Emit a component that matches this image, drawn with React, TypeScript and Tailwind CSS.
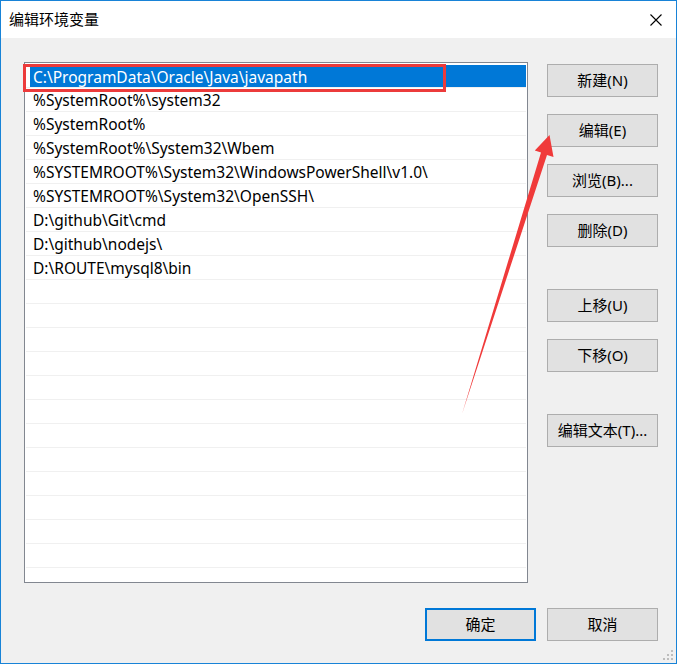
import React from "react";

const rows = [
  "C:\\ProgramData\\Oracle\\Java\\javapath",
  "%SystemRoot%\\system32",
  "%SystemRoot%",
  "%SystemRoot%\\System32\\Wbem",
  "%SYSTEMROOT%\\System32\\WindowsPowerShell\\v1.0\\",
  "%SYSTEMROOT%\\System32\\OpenSSH\\",
  "D:\\github\\Git\\cmd",
  "D:\\github\\nodejs\\",
  "D:\\ROUTE\\mysql8\\bin",
];

function Btn({ label, def, className = "" }: { label: string; def?: boolean; className?: string }) {
  return (
    <div
      className={
        "w-[111px] h-[33px] flex items-center justify-center bg-[#e1e1e1] text-[15px] text-black " +
        (def ? "border-2 border-[#0078d7] " : "border border-[#adadad] ") +
        className
      }
    >
      {label}
    </div>
  );
}

export default function App() {
  const total = 21;
  return (
    <div className="relative w-[677px] h-[664px] border border-[#1883d7] bg-[#f0f0f0] flex flex-col font-['Noto_Sans','Noto_Sans_CJK_SC',sans-serif] text-black overflow-hidden">
      {/* title bar */}
      <div className="h-[37px] bg-white flex items-center justify-between pl-[8px] pr-[14px] shrink-0">
        <span className="text-[15px] font-['Noto_Sans_CJK_SC',sans-serif]">编辑环境变量</span>
        <svg width="12" height="12" viewBox="0 0 12 12">
          <path d="M0.5 0.5 L11.5 11.5 M11.5 0.5 L0.5 11.5" stroke="#000" strokeWidth="1.1" />
        </svg>
      </div>

      {/* body */}
      <div className="flex pl-[23px] pt-[24px] gap-[19px]">
        <div className="w-[504px] h-[521px] border border-[#828790] bg-white pt-[1px] px-[1px] overflow-hidden">
          {Array.from({ length: total }).map((_, i) => {
            const text = rows[i];
            const sel = i === 0;
            return (
              <div key={i} className="h-[24px] border-b border-[#f0f0f0] flex">
                {sel ? (
                  <div className="ml-[4px] mt-[1px] flex-1 bg-[#0078d7] text-white text-[15.5px] leading-[22px] pt-[1px] pl-[3px] whitespace-nowrap">
                    {text}
                  </div>
                ) : (
                  <div className="flex-1 text-[15.5px] leading-[21px] pt-[2px] pl-[7px] whitespace-nowrap">{text ?? ""}</div>
                )}
              </div>
            );
          })}
        </div>
        <div className="flex flex-col pt-[2px]">
          <Btn label="新建(N)" />
          <Btn label="编辑(E)" className="mt-[17px]" />
          <Btn label="浏览(B)..." className="mt-[17px]" />
          <Btn label="删除(D)" className="mt-[17px]" />
          <Btn label="上移(U)" className="mt-[42px]" />
          <Btn label="下移(O)" className="mt-[17px]" />
          <Btn label="编辑文本(T)..." className="mt-[42px]" />
        </div>
      </div>

      {/* footer */}
      <div className="flex justify-end gap-[11px] pr-[18px] mt-[25px]">
        <Btn label="确定" def />
        <Btn label="取消" />
      </div>

      {/* resize grip */}
      <svg className="absolute right-[2px] bottom-[2px]" width="11" height="11" viewBox="0 0 11 11">
        <rect x="8" y="0" width="2" height="2" fill="#bdbdbd" />
        <rect x="4" y="4" width="2" height="2" fill="#bdbdbd" />
        <rect x="8" y="4" width="2" height="2" fill="#bdbdbd" />
        <rect x="0" y="8" width="2" height="2" fill="#bdbdbd" />
        <rect x="4" y="8" width="2" height="2" fill="#bdbdbd" />
        <rect x="8" y="8" width="2" height="2" fill="#bdbdbd" />
      </svg>

      {/* red highlight box */}
      <div className="absolute left-[22px] top-[63px] w-[423px] h-[28px] border-[3px] border-[#ec3b3b]" />

      {/* red arrow */}
      <svg className="absolute left-[-1px] top-[-1px] pointer-events-none" width="677" height="664" viewBox="0 0 677 664">
        <polygon
          points="549.5,135 553.5,157 547,155 462,414 541,152.5 534.8,150.4"
          fill="#f03a3a"
        />
      </svg>
    </div>
  );
}
